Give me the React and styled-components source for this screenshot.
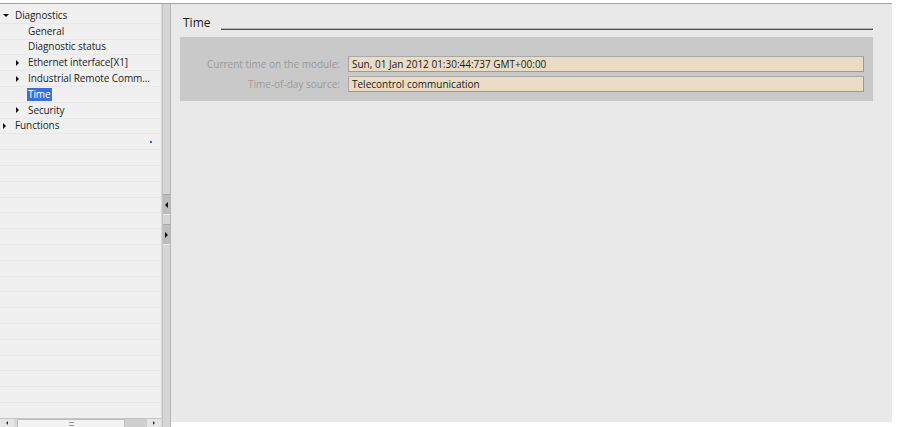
import React from "react";
import styled, { createGlobalStyle } from "styled-components";

const Global = createGlobalStyle`
  html, body { margin: 0; padding: 0; background: #ffffff; }
  body { font-family: "Open Sans", "Noto Sans", sans-serif; }
  #root { width: 900px; height: 427px; overflow: hidden; }
`;

const Page = styled.div`
  width: 900px;
  height: 427px;
  padding-top: 3px;
  box-sizing: border-box;
  background: #ffffff;
`;

const Frame = styled.div`
  width: 892px;
  height: 424px;
  border-top: 1px solid #a3a3a3;
  box-sizing: border-box;
  display: flex;
`;

const LeftPane = styled.div`
  width: 162px;
  display: flex;
  flex-direction: column;
  background: #f0f0f0;
  border-right: 1px solid #d8d8d8;
  box-sizing: border-box;
`;

const Tree = styled.div`
  flex: 1;
  padding-top: 4px;
  overflow: hidden;
`;

const Row = styled.div`
  height: 15.8px;
  box-sizing: border-box;
  border-bottom: 1px solid #e7e7e7;
  display: flex;
  align-items: center;
  padding-left: ${(p) => p.$indent}px;
  padding-right: 9px;
  font-size: 10px;
  letter-spacing: -0.1px;
  color: #1e1e1e;
  white-space: nowrap;
`;

const Toggle = styled.span`
  width: 11px;
  flex: none;
  display: flex;
  align-items: center;
  justify-content: flex-start;
  padding-left: 1px;
`;

const Label = styled.span`
  padding: 0 1px;
  line-height: 13px;
  background: ${(p) => (p.$selected ? "#3b6fd6" : "transparent")};
  color: ${(p) => (p.$selected ? "#ffffff" : "inherit")};
`;

const Dot = styled.span`
  margin-left: auto;
  width: 2px;
  height: 2px;
  background: #2f5fe0;
`;

const HScroll = styled.div`
  height: 8px;
  display: flex;
  align-items: stretch;
  background: #d9d9d9;
  border-top: 1px solid #c4c4c4;
`;

const ScrollBtn = styled.div`
  width: 14px;
  display: flex;
  align-items: center;
  justify-content: center;
  background: #e6e6e6;
`;

const Thumb = styled.div`
  width: 106px;
  margin-left: 3px;
  background: #f2f2f2;
  border: 1px solid #bdbdbd;
  border-bottom: none;
  display: flex;
  justify-content: center;
  align-items: center;
`;

const Grip = styled.span`
  width: 5px;
  height: 2px;
  border-top: 1px solid #9a9a9a;
  border-bottom: 1px solid #9a9a9a;
`;

const Track = styled.div`
  flex: 1;
  background: #cfcfcf;
`;

const Splitter = styled.div`
  width: 7px;
  background: #d6d6d6;
  border-left: 1px solid #c2c2c2;
  border-right: 1px solid #b5b5b5;
  display: flex;
  flex-direction: column;
  padding-top: 190px;
  gap: 9px;
`;

const SplitBtn = styled.div`
  height: 19px;
  background: #bdbdbd;
  border-top: 1px solid #a9a9a9;
  border-bottom: 1px solid #e8e8e8;
  display: flex;
  align-items: center;
  justify-content: center;
`;

const RightPane = styled.div`
  flex: 1;
  background: #e9e9e9;
  margin-bottom: 5px;
  padding: 11px 19px 0 9px;
  display: flex;
  flex-direction: column;
`;

const SectionHead = styled.div`
  display: flex;
  align-items: flex-end;
  gap: 10px;
  height: 15px;
  margin-bottom: 7px;
`;

const SectionTitle = styled.span`
  font-size: 12px;
  color: #1c1c1c;
  padding-left: 3px;
  line-height: 14px;
`;

const SectionRule = styled.div`
  flex: 1;
  height: 1px;
  border-bottom: 1px solid #505050;
  background: #b5b5b5;
  margin-bottom: 0px;
`;

const Group = styled.div`
  background: #c9c9c9;
  padding: 19px 9px 9px 0;
  display: grid;
  grid-template-columns: 160px 1fr;
  column-gap: 8px;
  row-gap: 4px;
  align-items: center;
`;

const FieldLabel = styled.span`
  text-align: right;
  font-size: 10px;
  color: #999999;
  white-space: nowrap;
`;

const Field = styled.div`
  height: 16px;
  box-sizing: border-box;
  background: #eadcc4;
  border: 1px solid #a8a8a8;
  border-right-color: #9a9a9a;
  border-bottom-color: #9a9a9a;
  font-size: 10px;
  color: #1a1a1a;
  padding-left: 3px;
  display: flex;
  align-items: center;
  white-space: nowrap;
`;

const Tri = ({ dir, size = 4, color = "#111" }) => {
  const s = size;
  const pts = {
    right: `0,0 ${s},${s} 0,${s * 2}`,
    left: `${s},0 0,${s} ${s},${s * 2}`,
    down: `0,0 ${s * 2},0 ${s},${s}`,
  }[dir];
  const w = dir === "down" ? s * 2 : s;
  const h = dir === "down" ? s : s * 2;
  return (
    <svg width={w} height={h} viewBox={`0 0 ${w} ${h}`}>
      <polygon points={pts} fill={color} />
    </svg>
  );
};

const treeItems = [
  { text: "Diagnostics", indent: 2, toggle: "down" },
  { text: "General", indent: 15 },
  { text: "Diagnostic status", indent: 15 },
  { text: "Ethernet interface[X1]", indent: 15, toggle: "right" },
  { text: "Industrial Remote Comm...", indent: 15, toggle: "right" },
  { text: "Time", indent: 15, selected: true },
  { text: "Security", indent: 15, toggle: "right" },
  { text: "Functions", indent: 2, toggle: "right" },
];

export default function App() {
  const empty = Array.from({ length: 18 });
  return (
    <>
      <Global />
      <Page>
        <Frame>
          <LeftPane>
            <Tree>
              {treeItems.map((it) => (
                <Row key={it.text} $indent={it.indent}>
                  <Toggle>{it.toggle && <Tri dir={it.toggle} size={3} />}</Toggle>
                  <Label $selected={it.selected}>{it.text}</Label>
                </Row>
              ))}
              <Row $indent={0}>
                <Dot />
              </Row>
              {empty.map((_, i) => (
                <Row key={i} $indent={0} />
              ))}
            </Tree>
            <HScroll>
              <ScrollBtn>
                <Tri dir="left" size={2} color="#333" />
              </ScrollBtn>
              <Thumb>
                <Grip />
              </Thumb>
              <Track />
              <ScrollBtn>
                <Tri dir="right" size={2} color="#333" />
              </ScrollBtn>
            </HScroll>
          </LeftPane>
          <Splitter>
            <SplitBtn>
              <Tri dir="left" size={3} />
            </SplitBtn>
            <SplitBtn>
              <Tri dir="right" size={3} />
            </SplitBtn>
          </Splitter>
          <RightPane>
            <SectionHead>
              <SectionTitle>Time</SectionTitle>
              <SectionRule />
            </SectionHead>
            <Group>
              <FieldLabel>Current time on the module:</FieldLabel>
              <Field>Sun, 01 Jan 2012 01:30:44:737 GMT+00:00</Field>
              <FieldLabel>Time-of-day source:</FieldLabel>
              <Field>Telecontrol communication</Field>
            </Group>
          </RightPane>
        </Frame>
      </Page>
    </>
  );
}
